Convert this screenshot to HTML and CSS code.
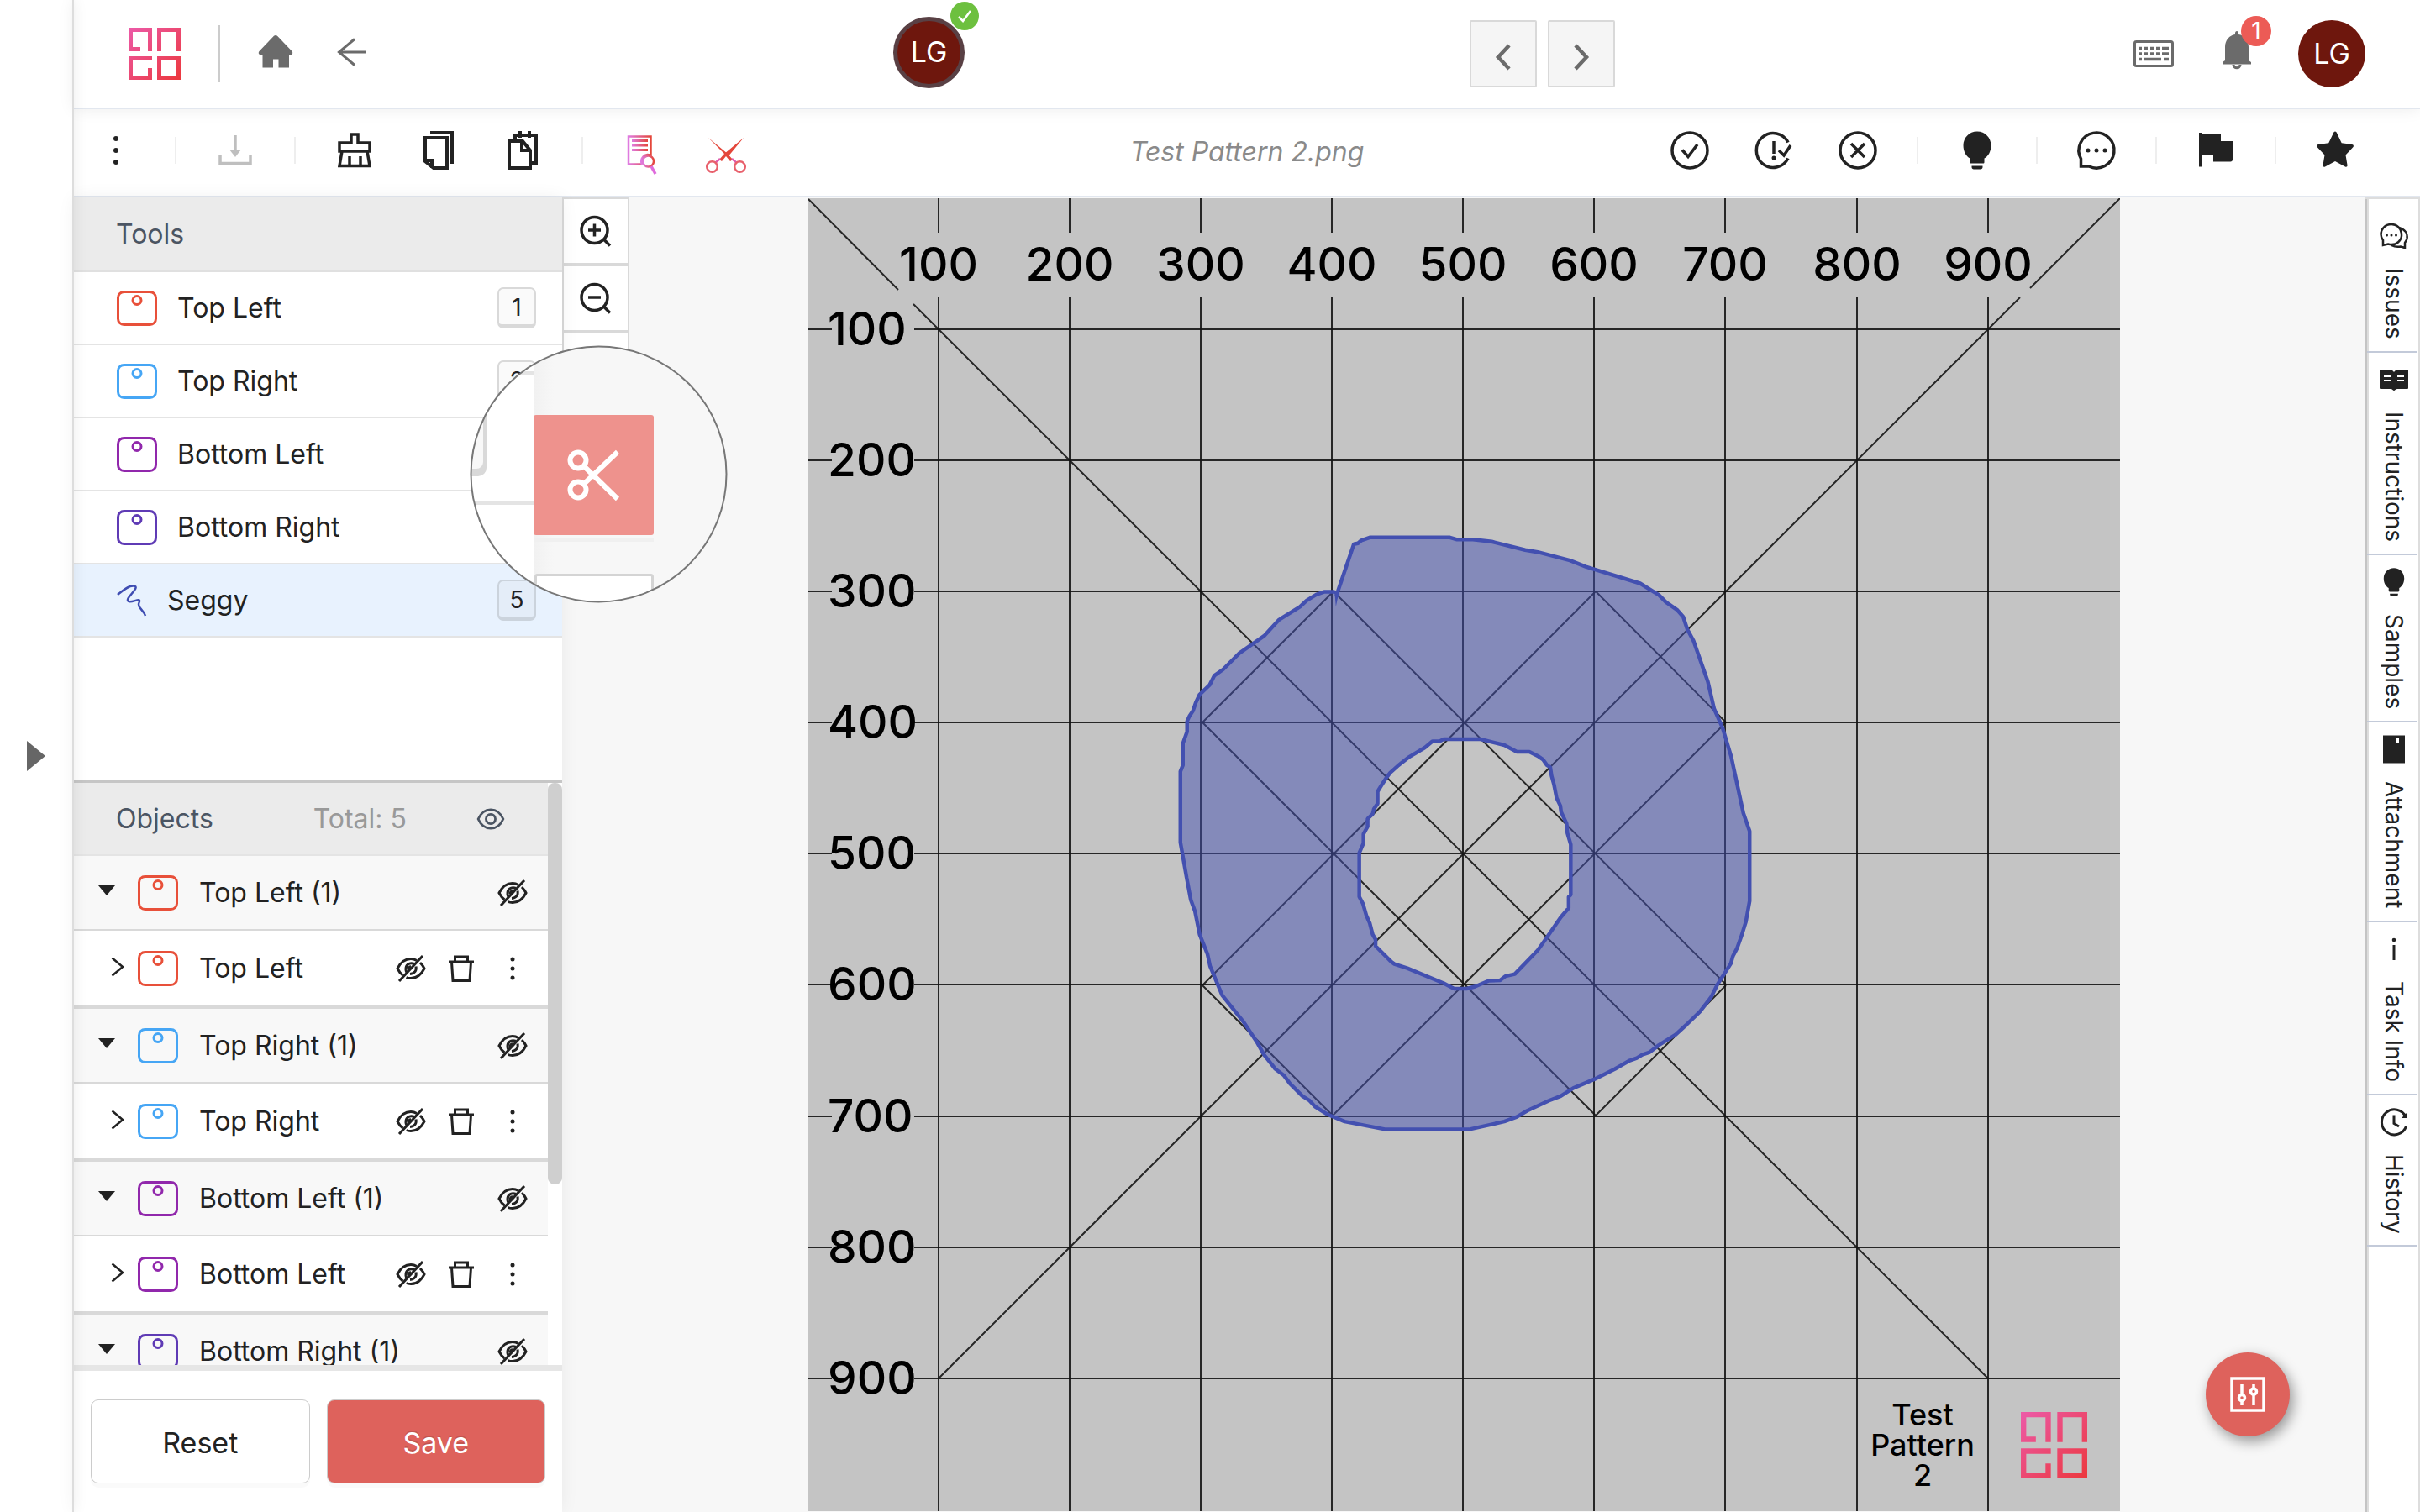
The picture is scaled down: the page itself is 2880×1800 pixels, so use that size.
FILE: index.html
```html
<!DOCTYPE html>
<html lang="en">
<head>
<meta charset="utf-8">
<title>Test Pattern 2.png</title>
<link rel="stylesheet" href="styles.css">
</head>
<body>
<svg class="sprite" aria-hidden="true">
  <defs>
    <linearGradient id="brand" x1="0" y1="0" x2="62" y2="62" gradientUnits="userSpaceOnUse">
      <stop offset="0" stop-color="#ec5aa8"/><stop offset="1" stop-color="#ec383d"/>
    </linearGradient>
    <linearGradient id="pinkred" x1="0" y1="0" x2="1" y2="0">
      <stop offset="0" stop-color="#df7be0"/><stop offset="1" stop-color="#e4473b"/>
    </linearGradient>
    <symbol id="logo" viewBox="0 0 62 62">
      <path fill="none" stroke="url(#brand)" stroke-width="5" d="M25.500 28V2.500H2.500V25.500H14M36.500 28V2.500H59.500V28M28 36.500H2.500V59.500H25.500V48M36.500 36.500H59.500V59.500H36.500Z"/>
    </symbol>
    <symbol id="tag" viewBox="0 0 48 42">
      <rect x="1.500" y="1.500" width="45" height="39" rx="7" fill="none" stroke="currentColor" stroke-width="3"/>
      <circle cx="24" cy="11.500" r="5" fill="none" stroke="currentColor" stroke-width="3"/>
    </symbol>
    <symbol id="eye-off" viewBox="0 0 36 32">
      <g fill="none" stroke="currentColor" stroke-width="3">
        <path d="M25 6.500C22.500 5 20.500 4.500 18 4.500 10 4.500 5 10 2 16c1.500 3 3.500 6 6.500 8M12.500 26.500c1.500.700 3.500 1 5.500 1 8 0 13-5.500 16-11.500-1.300-2.700-3-5-5-7"/>
        <path d="M22 10.500C16 8 11.500 12 12 17.500c.200 1.500.500 2 1 3M24 13.500c1 5-1.500 8.500-7 9"/>
        <path d="M18 13.500c-2 .500-3 2-3 4"/><path d="M32 1L4 31"/>
      </g>
    </symbol>
    <symbol id="eye" viewBox="0 0 36 28">
      <path d="M2 14C5 7 10.500 2 18 2s13 5 16 12c-3 7-8.500 12-16 12S5 21 2 14z" fill="none" stroke="currentColor" stroke-width="3"/>
      <circle cx="18" cy="14" r="6" fill="none" stroke="currentColor" stroke-width="3"/>
    </symbol>
    <symbol id="trash" viewBox="0 0 32 32">
      <path d="M1 8H31M8.500 7V2H23.500V7M4.500 8L6 30.500H26L27.500 8" fill="none" stroke="currentColor" stroke-width="3"/>
    </symbol>
    <symbol id="dots" viewBox="0 0 8 32">
      <circle cx="4" cy="5" r="2.500"/><circle cx="4" cy="16" r="2.500"/><circle cx="4" cy="27" r="2.500"/>
    </symbol>
    <symbol id="caret" viewBox="0 0 20 12"><path d="M0 0H20L10 12Z"/></symbol>
    <symbol id="chev" viewBox="0 0 16 24"><path d="M1.500 1.500L14 12 1.500 22.500" fill="none" stroke="currentColor" stroke-width="2.500"/></symbol>
    <symbol id="bulb" viewBox="0 0 46 46">
      <path d="M23 .500c9.500 0 16.500 7.500 16.500 16.500 0 7-3 13-8 15.500V37c0 1-.500 1.500-1.500 1.500H16c-1 0-1.500-.500-1.500-1.500V32.500c-5-2.500-8-8.500-8-15.500C6.500 8 13.500.500 23 .500zM16.500 41.500h13v1.500c0 1.500-1 2.500-2.500 2.500H19c-1.500 0-2.500-1-2.500-2.500z"/>
    </symbol>
  </defs>
</svg>

<div class="app">
  <aside class="gutter">
    <button class="bare" aria-label="Expand menu"><svg width="24" height="36" viewBox="0 0 24 36"><path fill="#666" d="M2 0L24 18 2 36Z"/></svg></button>
  </aside>

  <div class="main">
    <header class="header">
      <div class="header-left">
        <a href="#" class="brand" aria-label="Ango"><svg width="62" height="62"><use href="#logo"/></svg></a>
        <span class="rule"></span>
        <a href="#" class="home" aria-label="Home"><svg width="42" height="40" viewBox="0 0 42 40"><path fill="#6b6b6b" d="M21 0C22.500 0 23 .800 24 1.800L40.500 19c1.500 2 .500 4-1.500 4H37V38.500H24.500V28.500H18V38.500H5.500V23H3C1 23 0 21 1.500 19L18 1.800C19 .800 19.500 0 21 0z"/></svg></a>
        <a href="#" class="back" aria-label="Back"><svg width="34" height="34" viewBox="0 0 34 34"><path fill="none" stroke="#6b6b6b" stroke-width="3" d="M34 17H3M21 1.500L2.500 17 21 32.500"/></svg></a>
      </div>
      <div class="assignee">
        <span class="avatar ringed">LG</span>
        <svg class="assignee-ok" width="34" height="34" viewBox="0 0 34 34"><circle cx="17" cy="17" r="17" fill="#6dc03f"/><path d="M10 18l5 5 9-12" fill="none" stroke="#fff" stroke-width="2.500"/></svg>
      </div>
      <nav class="pager">
        <button aria-label="Previous"><svg width="20" height="32" viewBox="0 0 20 32"><path d="M17 2L4 16 17 30" fill="none" stroke="#6b6b6b" stroke-width="4.500"/></svg></button>
        <button aria-label="Next"><svg width="20" height="32" viewBox="0 0 20 32"><path d="M3 2L16 16 3 30" fill="none" stroke="#6b6b6b" stroke-width="4.500"/></svg></button>
        <span class="spacer"></span>
        <a href="#" class="keys" aria-label="Shortcuts"><svg width="48" height="32" viewBox="0 0 48 32"><rect x="1.500" y="1.500" width="45" height="29" rx="2" fill="none" stroke="#6b6b6b" stroke-width="3"/><path stroke="#6b6b6b" stroke-width="3.500" fill="none" d="M6 9.500h4M13 9.500h4M20 9.500h4M27 9.500h4M34 9.500h8M6 16h4M13 16h4M20 16h4M27 16h4M34 16h8M6 22.500h4M13 22.500h20M36 22.500h6"/></svg></a>
        <a href="#" class="bell" aria-label="Notifications"><svg width="34" height="46" viewBox="0 0 34 46"><path fill="#6b6b6b" d="M17 0c1.200 0 2 1 2 2.500V4c7 1 12 7 12 15v16l3 2v2.500H0V37l3-2V19C3 11 8 5 15 4V2.500C15 1 15.800 0 17 0z"/><path d="M13 40c0 5 8 5 8 0" fill="none" stroke="#6b6b6b" stroke-width="3"/></svg><span class="count">1</span></a>
        <span class="avatar">LG</span>
      </nav>
    </header>

    <div class="toolbar">
      <div class="tools-left">
        <button class="tb" aria-label="More"><svg width="8" height="36" viewBox="0 0 8 36"><circle cx="4" cy="4" r="3"/><circle cx="4" cy="18" r="3"/><circle cx="4" cy="32" r="3"/></svg></button>
        <span class="sep"></span>
        <button class="tb" aria-label="Download"><svg width="40" height="46" viewBox="0 0 40 46"><path d="M20 5V24" stroke="#bfbfbf" stroke-width="3.500"/><path fill="#bfbfbf" d="M13 22H27L20 31Z"/><path d="M2 28V38.500H38V28" fill="none" stroke="#bfbfbf" stroke-width="3.500"/></svg></button>
        <span class="sep"></span>
        <button class="tb" aria-label="Clean"><svg width="40" height="46" viewBox="0 0 40 46"><path fill="none" stroke="#222" stroke-width="3.500" d="M16 14V4H24V14H38V24H2V14ZM5 24L2 41.500H38L35 24M14 42V30M27 42V30"/></svg></button>
        <button class="tb" aria-label="Copy"><svg width="36" height="46" viewBox="0 0 36 46"><path fill="none" stroke="#222" stroke-width="4" d="M8 2H34V39M2 8H28V44H12L2 36ZM2 35H10V44"/></svg></button>
        <button class="tb" aria-label="Paste"><svg width="36" height="46" viewBox="0 0 36 46"><path fill="none" stroke="#222" stroke-width="4" d="M9 12V5H34V38H28M15 0V8M26 0V8M2 12H18L27 23V44H2ZM17 12V23H27"/></svg></button>
        <span class="sep"></span>
        <button class="tb" aria-label="Review"><svg class="low" width="36" height="50" viewBox="0 0 36 50"><g fill="none" stroke="url(#pinkred)" stroke-width="2.500"><path d="M18 35.500H2V2.500H28.500V27"/><circle cx="25.500" cy="32" r="6.500"/><path d="M18 36C15 28 22 22 28 25"/></g><path fill="url(#pinkred)" d="M6 6H25V9H6ZM6 11.500H25V14.500H6ZM6 17H25V20H6Z"/><path d="M29 38L34 47" stroke="#df6bdc" stroke-width="3.500"/></svg></button>
        <button class="tb" aria-label="Cut"><svg class="low" width="48" height="44" viewBox="0 0 48 44"><path fill="#e4473b" d="M3 1L26 20 32 27 29 29 24 23 19 29 16 27 22 20 45 1 26 24Z"/><g fill="none" stroke-width="2.500"><path stroke="#df5cae" d="M17 26L11 31M31 26L37 31"/><circle cx="7.500" cy="35.500" r="6.300" stroke="#e8606c"/><circle cx="40.500" cy="35.500" r="6.300" stroke="#e8606c"/></g></svg></button>
      </div>
      <h1 class="filename">Test Pattern 2.png</h1>
      <div class="tools-right">
        <button class="tb" aria-label="Approve"><svg width="46" height="46" viewBox="0 0 46 46"><g fill="none" stroke="#222" stroke-width="3.500"><circle cx="23" cy="23" r="21"/><path d="M14 22.500l7 8L32 16"/></g></svg></button>
        <button class="tb" aria-label="Flag with warning"><svg width="46" height="46" viewBox="0 0 46 46"><g fill="none" stroke="#222" stroke-width="3.500"><path d="M40 13.500A20 20.500 0 1 0 40 32.500M23 12V27M29 23l6 6 8-12"/></g><circle cx="23" cy="32" r="2.500"/></svg></button>
        <button class="tb" aria-label="Reject"><svg width="46" height="46" viewBox="0 0 46 46"><g fill="none" stroke="#222" stroke-width="3.500"><circle cx="23" cy="23" r="21"/><path d="M15 15L31 31M31 15L15 31"/></g></svg></button>
        <span class="sep"></span>
        <button class="tb" aria-label="Hint"><svg width="46" height="46"><use href="#bulb"/></svg></button>
        <span class="sep"></span>
        <button class="tb" aria-label="Comments"><svg width="46" height="46" viewBox="0 0 46 46"><path d="M4.500 42H14A21 21 0 1 0 4.500 33Z" fill="none" stroke="#222" stroke-width="3.500"/><circle cx="13" cy="23" r="2.500"/><circle cx="23" cy="23" r="2.500"/><circle cx="33" cy="23" r="2.500"/></svg></button>
        <span class="sep"></span>
        <button class="tb" aria-label="Flag"><svg width="42" height="46" viewBox="0 0 42 46"><path d="M1 2H4V4H27V12H41V34C41 35.500 40 36.500 38.500 36.500H18V29H4V42.500H1Z"/></svg></button>
        <span class="sep"></span>
        <button class="tb" aria-label="Star"><svg width="44" height="46" viewBox="0 0 44 46"><path d="M22 0.500c1 0 1.500.800 2 1.700l5.700 12 12.300 1.800c2 .300 2.600 2 1 3.600L34.500 28.500 36.500 40.500c.300 2-1 2.700-2.500 2L22 36 10 42.500c-1.500.700-2.800 0-2.500-2L9.500 28.500 1 19.600C-.600 18 0 16.300 2 16L14.300 14.200 20 2.200C20.500 1.300 21 .500 22 .500z"/></svg></button>
      </div>
    </div>

    <div class="work">
      <aside class="panel">
        <section class="tools">
          <h2 class="bar">Tools</h2>
          <ul class="tool-list">
            <li><button class="tool"><svg class="red" width="48" height="42"><use href="#tag"/></svg><span>Top Left</span><kbd>1</kbd></button></li>
            <li><button class="tool"><svg class="blue" width="48" height="42"><use href="#tag"/></svg><span>Top Right</span><kbd>2</kbd></button></li>
            <li><button class="tool"><svg class="purple" width="48" height="42"><use href="#tag"/></svg><span>Bottom Left</span><kbd>3</kbd></button></li>
            <li><button class="tool"><svg class="indigo" width="48" height="42"><use href="#tag"/></svg><span>Bottom Right</span><kbd>4</kbd></button></li>
            <li><button class="tool active"><svg width="36" height="38" viewBox="0 0 36 38"><path d="M1 12C7 7 14 1 20 1.500 30 2 8 17 14 20 18 22 28 15 27 20 23 27 32 30 34 37" fill="none" stroke="#3f4db2" stroke-width="2.500"/></svg><span>Seggy</span><kbd>5</kbd></button></li>
          </ul>
        </section>

        <section class="objects">
          <div class="objects-body">
            <div class="bar"><h2>Objects</h2><span class="total">Total: 5</span><button class="bare" aria-label="Show all"><svg width="34" height="26"><use href="#eye"/></svg></button></div>
            <div class="group">
              <div class="row head"><svg class="caret" width="20" height="12"><use href="#caret"/></svg><svg class="red" width="48" height="42"><use href="#tag"/></svg><span>Top Left (1)</span><button class="bare" aria-label="Hide"><svg width="36" height="32"><use href="#eye-off"/></svg></button></div>
              <div class="row child"><svg class="chev" width="16" height="24"><use href="#chev"/></svg><svg class="red" width="48" height="42"><use href="#tag"/></svg><span>Top Left</span><button class="bare" aria-label="Hide"><svg width="36" height="32"><use href="#eye-off"/></svg></button><button class="bare" aria-label="Delete"><svg width="32" height="32"><use href="#trash"/></svg></button><button class="bare dots" aria-label="More"><svg width="8" height="32"><use href="#dots"/></svg></button></div>
            </div>
            <div class="group">
              <div class="row head"><svg class="caret" width="20" height="12"><use href="#caret"/></svg><svg class="blue" width="48" height="42"><use href="#tag"/></svg><span>Top Right (1)</span><button class="bare" aria-label="Hide"><svg width="36" height="32"><use href="#eye-off"/></svg></button></div>
              <div class="row child"><svg class="chev" width="16" height="24"><use href="#chev"/></svg><svg class="blue" width="48" height="42"><use href="#tag"/></svg><span>Top Right</span><button class="bare" aria-label="Hide"><svg width="36" height="32"><use href="#eye-off"/></svg></button><button class="bare" aria-label="Delete"><svg width="32" height="32"><use href="#trash"/></svg></button><button class="bare dots" aria-label="More"><svg width="8" height="32"><use href="#dots"/></svg></button></div>
            </div>
            <div class="group">
              <div class="row head"><svg class="caret" width="20" height="12"><use href="#caret"/></svg><svg class="purple" width="48" height="42"><use href="#tag"/></svg><span>Bottom Left (1)</span><button class="bare" aria-label="Hide"><svg width="36" height="32"><use href="#eye-off"/></svg></button></div>
              <div class="row child"><svg class="chev" width="16" height="24"><use href="#chev"/></svg><svg class="purple" width="48" height="42"><use href="#tag"/></svg><span>Bottom Left</span><button class="bare" aria-label="Hide"><svg width="36" height="32"><use href="#eye-off"/></svg></button><button class="bare" aria-label="Delete"><svg width="32" height="32"><use href="#trash"/></svg></button><button class="bare dots" aria-label="More"><svg width="8" height="32"><use href="#dots"/></svg></button></div>
            </div>
            <div class="group">
              <div class="row head"><svg class="caret" width="20" height="12"><use href="#caret"/></svg><svg class="indigo" width="48" height="42"><use href="#tag"/></svg><span>Bottom Right (1)</span><button class="bare" aria-label="Hide"><svg width="36" height="32"><use href="#eye-off"/></svg></button></div>
            </div>
          </div>
          <div class="track"><div class="thumb"></div></div>
        </section>

        <footer class="actions">
          <button class="btn">Reset</button>
          <button class="btn primary">Save</button>
        </footer>
      </aside>

      <main class="canvas">
        <svg class="pattern" viewBox="962 236 1561 1563" aria-label="Test pattern">
          <rect x="962" y="236" width="1561" height="1563" fill="#c4c4c4"/>
          <g stroke="#151515" stroke-width="2" fill="none" stroke-opacity=".9">
            <path d="M1117 236V277M1273 236V277M1429 236V277M1585 236V277M1741 236V277M1897 236V277M2053 236V277M2210 236V277M2366 236V277"/>
            <path d="M1117 354V1799M1273 354V1799M1429 354V1799M1585 354V1799M1741 354V1799M1897 354V1799M2053 354V1799M2210 354V1799M2366 354V1799"/>
            <path d="M962 392H990M962 548H990M962 704H990M962 860H990M962 1016H990M962 1172H990M962 1329H990M962 1485H990M962 1641H990"/>
            <path d="M1088 392H2523M1088 548H2523M1088 704H2523M1088 860H2523M1088 1016H2523M1088 1172H2523M1088 1329H2523M1088 1485H2523M1088 1641H2523"/>
            <path d="M962 237L1069 345M1087 362L2366 1641M2523 236L2416 343M2404 354L1117 1641"/>
            <path d="M1431 860L1587 704M1587 704L2054 1172M1899 704L2054 860M1899 704L1431 1173M1431 860L1899 1328M2054 860L1585 1329M1431 1173L1586 1328M2054 1173L1899 1328"/>
          </g>
          <g class="marks" text-anchor="middle">
            <text x="1117" y="334">100</text><text x="1273" y="334">200</text><text x="1429" y="334">300</text><text x="1585" y="334">400</text><text x="1741" y="334">500</text><text x="1897" y="334">600</text><text x="2053" y="334">700</text><text x="2210" y="334">800</text><text x="2366" y="334">900</text>
          </g>
          <g class="marks">
            <text x="985" y="411">100</text><text x="985" y="567">200</text><text x="985" y="723">300</text><text x="985" y="879">400</text><text x="985" y="1035">500</text><text x="985" y="1191">600</text><text x="985" y="1348">700</text><text x="985" y="1504">800</text><text x="985" y="1660">900</text>
          </g>
          <g class="caption" text-anchor="middle">
            <text x="2288" y="1697">Test</text><text x="2288" y="1733">Pattern</text><text x="2288" y="1769">2</text>
          </g>
          <use href="#logo" x="2405" y="1681" width="79" height="79"/>
          <g transform="translate(1360 600) scale(.4974)">
            <path fill="#4350b0" fill-opacity=".5" fill-rule="evenodd" stroke="#4350b0" stroke-width="9" stroke-linejoin="bevel" d="M463 222L468 205 505 96 515 94 523 87 543 80 735 80 752 85 790 85 835 90 915 110 945 115 1022 135 1060 150 1190 190 1235 218 1252 235 1278 253 1293 270 1303 300 1318 328 1352 425 1367 490 1387 535 1408 605 1428 698 1437 740 1452 783 1452 950 1443 1000 1432 1035 1422 1063 1412 1082 1407 1100 1375 1150 1360 1180 1333 1215 1300 1247 1275 1270 1235 1295 1213 1312 1195 1318 1182 1326 1165 1332 1130 1352 1080 1377 1030 1398 1000 1417 972 1428 920 1452 895 1467 865 1478 780 1497 582 1497 483 1478 440 1460 412 1442 398 1427 382 1417 352 1387 337 1367 317 1352 290 1318 272 1286 240 1238 190 1176 161 1106 155 1078 136 1030 125 975 115 948 105 895 90 810 90 640 96 625 96 573 106 545 106 520 112 507 120 495 127 475 136 456 160 433 171 411 192 396 231 357 290 316 326 277 376 246 392 231 415 217 435 210 455 210 466 213ZM693 568L710 568 720 563 808 563 865 577 895 593 925 593 945 603 958 612 967 625 975 630 978 650 984 672 990 703 999 722 1001 737 1014 765 1016 788 1024 815 1024 935 1019 940 1019 967 1000 989 965 1040 945 1068 890 1125 868 1130 855 1140 828 1141 795 1155 775 1160 745 1160 720 1147 633 1111 602 1101 595 1096 557 1058 557 1042 550 1030 543 1003 535 985 527 957 518 940 518 835 528 812 528 790 538 772 538 753 550 742 553 730 562 717 562 688 570 675 583 655 592 643 610 627 635 607 675 583Z"/>
            <path fill="#4350b0" d="M459 208H470L462 246Z"/>
          </g>
        </svg>

        <div class="zoom">
          <button aria-label="Zoom in"><svg width="38" height="38" viewBox="0 0 38 38"><g fill="none" stroke="#222" stroke-width="3.500"><circle cx="17.500" cy="18" r="15.500"/><path d="M28.500 29L36 36.500M10 18H25M17.500 10.500V25.500"/></g></svg></button>
          <button aria-label="Zoom out"><svg width="38" height="38" viewBox="0 0 38 38"><g fill="none" stroke="#222" stroke-width="3.500"><circle cx="17.500" cy="18" r="15.500"/><path d="M28.500 29L36 36.500M10 18H25"/></g></svg></button>
          <button aria-label="Fit"></button>
        </div>

        <button class="fab" aria-label="Image settings"><svg width="42" height="42" viewBox="0 0 42 42"><g fill="none" stroke="#fff" stroke-width="3.500"><rect x="2" y="2" width="38" height="38"/><path d="M14 9V21M14 30V34M28 9V13M28 22V34"/><circle cx="14" cy="25" r="3.500"/><circle cx="28" cy="17.500" r="3.500"/></g></svg></button>
      </main>

      <nav class="rail">
        <button><svg width="34" height="34" viewBox="0 0 34 34"><g fill="none" stroke="#222" stroke-width="2.500"><path d="M4 22V28L10 26.500C20 29 27 22 26 14 25 7 20 3 14 3 6 3 1.500 9 1.500 15c0 3 1 5 2.500 7z"/><path d="M23 7C30 9 33.500 14 32.500 20 32 22.500 30.500 24 30 25V31L25 29.500C20 30.500 17 29.500 14 28"/></g><circle cx="8.500" cy="16" r="1.500"/><circle cx="14" cy="16" r="1.500"/><circle cx="19.500" cy="16" r="1.500"/></svg><span>Issues</span></button>
        <button><svg width="34" height="34" viewBox="0 0 34 34"><path d="M1.500 5H12C14.500 5 16 6.500 17 8 18 6.500 19.500 5 22 5H32.500C33.500 5 34 5.500 34 6.500V26.500C34 27.500 33.500 28 32.500 28H21C19 28 18 30 17 30S15 28 13 28H1.500C.500 28 0 27.500 0 26.500V6.500C0 5.500.500 5 1.500 5z"/><path stroke="#fff" stroke-width="2" d="M5 13H13M5 18H13M21 13H29M21 18H29"/></svg><span>Instructions</span></button>
        <button><svg width="34" height="34"><use href="#bulb"/></svg><span>Samples</span></button>
        <button><svg width="34" height="34" viewBox="0 0 34 34"><path d="M4 .500H30V33.500H4Z"/><path fill="#fff" d="M19 3H23V10H19Z"/></svg><span>Attachment</span></button>
        <button><svg width="34" height="34" viewBox="0 0 34 34"><circle cx="17" cy="6" r="2.300"/><path d="M15.500 12H18.500V30H15.500Z"/></svg><span>Task Info</span></button>
        <button><svg width="34" height="34" viewBox="0 0 34 34"><path d="M31 10.500A15 15 0 1 0 31.500 22M17 8.500V18.500L23 22" fill="none" stroke="#222" stroke-width="3"/><path d="M33 5V12H26Z"/></svg><span>History</span></button>
      </nav>
    </div>
  </div>

  <svg class="lens" viewBox="559 411 307 307" aria-label="Cut tool, magnified">
    <defs>
      <clipPath id="lensclip"><circle cx="712.500" cy="564.500" r="151.500"/></clipPath>
      <linearGradient id="edge"><stop offset="0" stop-color="#f1f1f1"/><stop offset="1" stop-color="#f7f7f7"/></linearGradient>
    </defs>
    <g clip-path="url(#lensclip)">
      <rect x="559" y="411" width="307" height="307" fill="#f7f7f7"/>
      <rect x="635" y="411" width="24" height="307" fill="url(#edge)"/>
      <rect x="559" y="411" width="76" height="307" fill="#fff"/>
      <path d="M559 444H635M559 599H635" stroke="#e4e4e4" stroke-width="4"/>
      <rect x="520" y="480" width="59" height="87" rx="10" fill="#d9d9d9"/>
      <rect x="520" y="480" width="55" height="78" rx="8" fill="#f8f8f8"/>
      <rect x="636" y="640" width="142" height="5" fill="#f0f0f0"/>
      <rect x="635" y="494" width="143" height="143" rx="3" fill="#ee928d"/>
      <g fill="none" stroke="#fff" stroke-width="6"><circle cx="688" cy="548" r="9.500"/><circle cx="688" cy="583" r="9.500"/><path d="M695 555L735 594M695 576L735 538"/></g>
      <rect x="637.500" y="684.500" width="139" height="80" rx="2" fill="#fff" stroke="#d4d4d4" stroke-width="3"/>
    </g>
    <circle cx="712.500" cy="564.500" r="152" fill="none" stroke="#777" stroke-width="2"/>
  </svg>
</div>
</body>
</html>
```
FILE: styles.css
```css
* { box-sizing: border-box; }

body {
  margin: 0;
  font-family: Inter, "Liberation Sans", sans-serif;
  font-size: 32px;
  line-height: 40px;
  color: #222;
  background: #fff;
}

button {
  font: inherit;
  color: inherit;
  background: none;
  border: 0;
  padding: 0;
  cursor: pointer;
}

svg { display: block; flex: none; fill: #222; overflow: visible; }
h1, h2 { margin: 0; font: inherit; }
.sprite { position: absolute; width: 0; height: 0; }
.bare { display: flex; }

.app { position: relative; display: flex; height: 100vh; overflow: hidden; }

.gutter {
  flex: none;
  width: 88px;
  display: flex;
  align-items: center;
  padding-left: 30px;
  border-right: 2px solid #ddd;
  box-shadow: 0 0 16px rgba(0, 0, 0, .08);
  z-index: 2;
}

.main { flex: 1; min-width: 0; display: flex; flex-direction: column; }

/* Header */
.header {
  flex: none;
  height: 130px;
  display: grid;
  grid-template-columns: 975fr 686fr 1131fr;
  align-items: center;
  border-bottom: 2px solid #e2e7ef;
  box-shadow: 0 0 18px rgba(0, 0, 0, .08);
  z-index: 1;
}
.header-left { display: flex; align-items: center; padding-left: 65px; }
.rule { width: 2px; height: 68px; margin-left: 45px; background: #ccc; }
.home { margin: 0 0 4px 45px; }
.back { margin: 0 0 4px 52px; }
.avatar {
  width: 80px;
  height: 80px;
  border-radius: 50%;
  display: flex;
  align-items: center;
  justify-content: center;
  background: #6e170d;
  color: #fff;
  font-size: 34px;
}
.assignee { position: relative; width: 85px; margin-bottom: 4px; }
.ringed { width: 85px; height: 85px; border: 5px solid #594044; }
.assignee-ok { position: absolute; top: -18px; right: -17px; }
.pager { display: flex; align-items: center; gap: 13px; padding-right: 65px; }
.pager button {
  width: 80px;
  height: 80px;
  display: flex;
  align-items: center;
  justify-content: center;
  padding-top: 8px;
  background: #f5f5f5;
  border: 2px solid #d9d9d9;
  border-radius: 2px;
}
.spacer { flex: 1; }
.bell { position: relative; margin: 0 43px 8px 45px; }
.count {
  position: absolute;
  top: -18px;
  left: 22px;
  width: 36px;
  height: 36px;
  border-radius: 50%;
  background: #ec5b56;
  color: #fff;
  font-size: 28px;
  line-height: 36px;
  text-align: center;
}
a { text-decoration: none; }

/* Toolbar */
.toolbar {
  flex: none;
  height: 105px;
  display: grid;
  grid-template-columns: 1fr auto 1fr;
  align-items: center;
  padding-bottom: 6px;
  border-bottom: 2px solid #e2e7ef;
}
.tools-left, .tools-right { display: flex; align-items: center; }
.tools-right { justify-content: flex-end; padding-right: 51px; }
.tb { width: 100px; height: 46px; display: flex; align-items: center; justify-content: center; }
.low { margin-top: 12px; }
.sep { width: 2px; height: 32px; margin: 0 20px; background: #eee; }
.filename { color: #8a8a8a; font-size: 32px; font-style: italic; padding-top: 4px; }

/* Working area */
.work { flex: 1; min-height: 0; display: flex; }

.panel {
  flex: none;
  width: 581px;
  display: flex;
  flex-direction: column;
  background: #fff;
  box-shadow: 0 0 20px rgba(0, 0, 0, .06);
  z-index: 1;
}
.tools, .objects { flex: 1 1 0; min-height: 0; overflow: hidden; }
.bar {
  height: 89px;
  display: flex;
  align-items: center;
  padding: 0 51px 0 50px;
  background: #ebebeb;
  border-bottom: 2px solid #e0e0e0;
  color: #4b5563;
}
.tool-list { list-style: none; margin: 0; padding: 0; }
.tool {
  width: 100%;
  height: 87px;
  display: flex;
  align-items: center;
  gap: 24px;
  padding: 0 31px 0 51px;
  border-bottom: 2px solid #e4e4e4;
}
.tool.active { background: #e8f2fe; }
.tool span { flex: 1; text-align: left; }
kbd {
  width: 46px;
  height: 49px;
  font: inherit;
  font-size: 28px;
  line-height: 45px;
  text-align: center;
  border: 2px solid #d9d9d9;
  border-bottom-width: 5px;
  border-radius: 7px;
  background: #fafafa;
}
.active kbd { background: #e4edf8; border-color: #cbd3dc; }

.red { color: #e8503a; }
.blue { color: #46a6f5; }
.purple { color: #9128ac; }
.indigo { color: #5f3bb5; }

.objects { display: flex; border-top: 4px solid #c6c6c6; flex-basis: 4px; }
.objects-body { flex: 1; min-width: 0; overflow: hidden; }
.objects .bar { height: 85px; border-bottom: 0; }
.total { flex: 1; text-align: right; padding-right: 83px; color: #999; }
.track { flex: none; width: 17px; }
.thumb { height: 69%; border-radius: 8px; background: #cfcfcf; }

.group { border: solid #d9d9d9; border-width: 2px 0; }
.objects-body .bar + .group { border-top-color: #e4e4e4; }
.row { display: flex; align-items: center; }
.row span { flex: 1; padding-left: 25px; }
.head { height: 89px; background: #f8f8f8; border-bottom: 2px solid #d9d9d9; padding: 0 24px 0 29px; }
.caret { margin: 0 27px 6px 0; }
.child { height: 89px; padding: 0 38px 0 44px; }
.chev { margin: 0 16px 4px 0; }
.child .bare { margin-left: 26px; }
.child .dots { margin-left: 41px; }

.actions {
  flex: none;
  display: flex;
  gap: 20px;
  padding: 34px 20px;
  border-top: 7px solid #e6e6e6;
}
.btn {
  flex: 1;
  height: 100px;
  padding-top: 4px;
  font-size: 34px;
  background: #fff;
  border: 1px solid #ccc;
  border-radius: 9px;
  box-shadow: 0 5px 0 rgba(0, 0, 0, .02);
}
.primary {
  background: #de625c;
  color: #fff;
  text-shadow: 0 -2px 0 rgba(0, 0, 0, .12);
}

/* Canvas */
.canvas {
  flex: 1;
  min-width: 0;
  position: relative;
  display: flex;
  justify-content: center;
  padding: 1px 0 1px 1px;
  background: #f7f7f7;
}
.pattern { height: 100%; min-width: 0; flex: 0 1 auto; overflow: hidden; }
.marks { font-size: 55px; font-weight: 500; fill: #000; }
.caption { font-size: 36px; font-weight: 500; fill: #000; }
.zoom { position: absolute; top: 0; left: 0; display: flex; flex-direction: column; }
.zoom button {
  width: 80px;
  height: 80px;
  display: flex;
  align-items: center;
  justify-content: center;
  background: #fff;
  border: 2px solid #d9d9d9;
}
.fab {
  position: absolute;
  right: 89px;
  bottom: 90px;
  width: 100px;
  height: 100px;
  display: flex;
  align-items: center;
  justify-content: center;
  border-radius: 50%;
  background: #de625c;
  box-shadow: 4px 6px 16px rgba(0, 0, 0, .4);
}

/* Side tabs */
.rail {
  flex: none;
  width: 66px;
  padding: 12px 1px 0 3px;
  background: #fff;
  border: solid #ddd;
  border-width: 2px 2px 0 0;
  box-shadow: inset 3px 0 0 #c4c4c4, inset 5px 0 0 #ddd;
}
.rail button {
  width: 100%;
  display: flex;
  flex-direction: column;
  align-items: center;
  gap: 21px;
  padding: 15px 0 14px 3px;
  border-bottom: 2px solid #c3cad9;
}
.rail span { writing-mode: vertical-rl; font-size: 28px; line-height: 34px; }

.lens { position: absolute; top: 411px; left: 559px; width: 307px; height: 307px; z-index: 3; }
```
